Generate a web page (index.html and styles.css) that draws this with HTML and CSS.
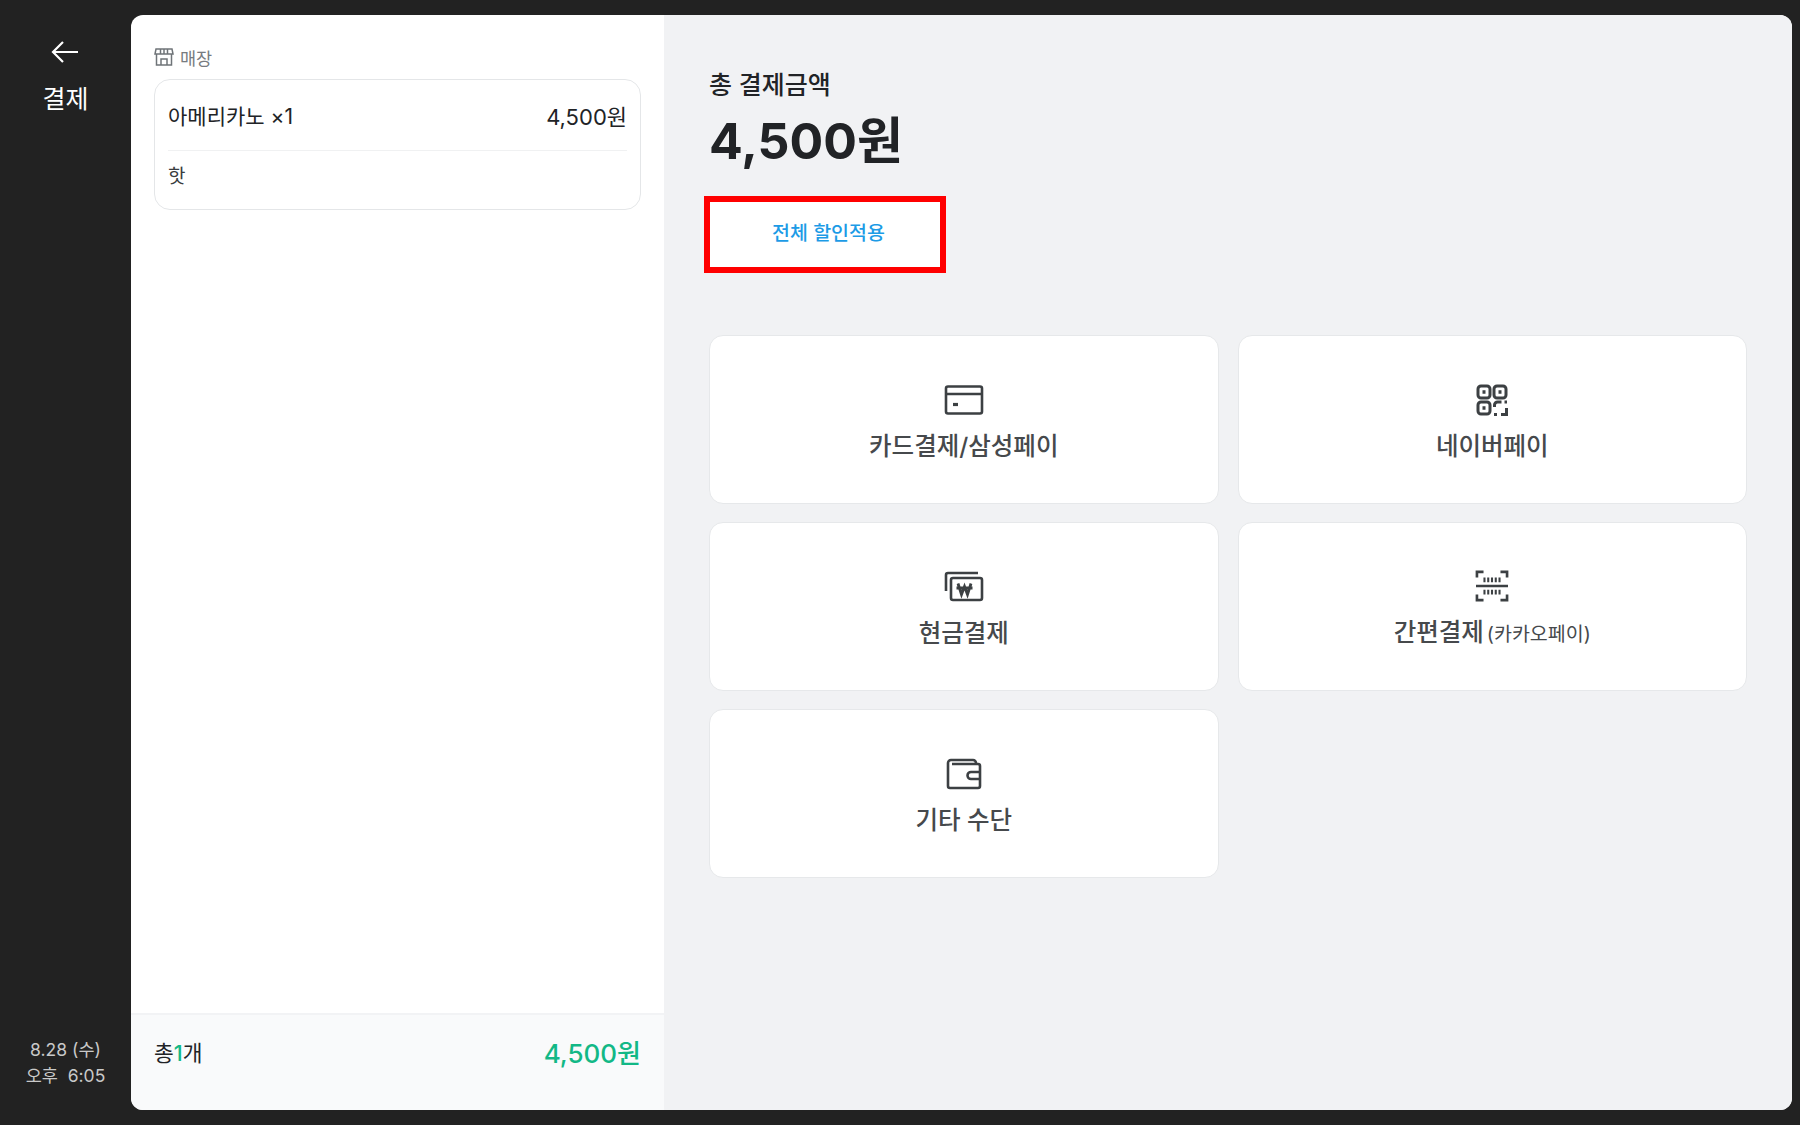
FILE: index.html
```html
<!DOCTYPE html>
<html lang="ko">
<head>
	<meta charset="utf-8">
	<title>결제</title>
	<link rel="stylesheet" href="styles.css">
</head>
<body>
	<div class="app">
		<nav class="side">
			<div class="side-top">
				<svg class="back" viewBox="0 0 28 24" fill="none" stroke="#fff" stroke-width="2.2"><path d="M27 12H2M12 2 2 12l10 10"/></svg>
				<div class="side-title">결제</div>
			</div>
			<div class="side-time">
				<div>8.28 (수)</div>
				<div>오후&nbsp; 6:05</div>
			</div>
		</nav>
		<main class="panel">
			<section class="order">
				<div class="order-body">
					<div class="place">
						<svg viewBox="0 0 20 20" fill="none" stroke="#6f7478" stroke-width="1.5"><path d="M2 2h16l1 5H1zM2.5 7v11h15V7M7 18v-6h6v6M6.5 2v5M13.5 2v5M10 2v5"/></svg>
						<span>매장</span>
					</div>
					<div class="item">
						<div class="item-row">
							<span>아메리카노 ×1</span>
							<span class="item-price">4,500원</span>
						</div>
						<div class="item-opt">핫</div>
					</div>
				</div>
				<div class="order-foot">
					<span class="foot-count">총<b>1</b>개</span>
					<span class="foot-price">4,500원</span>
				</div>
			</section>
			<section class="pay">
				<h2 class="pay-label">총 결제금액</h2>
				<div class="pay-total">4,500원</div>
				<div class="discount">전체 할인적용</div>
				<div class="methods">
					<div class="method">
						<svg viewBox="0 0 40 32" fill="none" stroke="#3c4043" stroke-width="2.6"><rect x="2" y="2.500" width="36" height="27" rx="2"/><path d="M2 10h36"/><path d="M9 20.500h5" stroke-width="3.200"/></svg>
						<div class="method-name">카드결제/삼성페이</div>
					</div>
					<div class="method">
						<svg viewBox="0 0 32 32" fill="none" stroke="#3c4043" stroke-width="3"><rect x="2" y="2" width="12" height="12" rx="3"/><rect x="18" y="2" width="12" height="12" rx="3"/><rect x="2" y="18" width="12" height="12" rx="3"/><path d="M18.500 23v-2a3 3 0 0 1 3-3h4M30.500 24v6.500H25M18 30.500h3M28.500 18h2.500"/><path d="M6.500 8h3M22.500 8h3M6.500 24h3" stroke-width="3.500"/></svg>
						<div class="method-name">네이버페이</div>
					</div>
					<div class="method">
						<svg viewBox="0 0 40 32" fill="none" stroke="#3c4043" stroke-width="2.6"><path d="M2 20V4a2 2 0 0 1 2-2h30"/><rect x="7" y="7" width="31" height="22" rx="2"/><path d="M14 12.500l3.500 11 3-8 3 8 3.500-11M12.500 17h16" stroke-width="2.800"/></svg>
						<div class="method-name">현금결제</div>
					</div>
					<div class="method">
						<svg viewBox="0 0 36 34" fill="none" stroke="#3c4043" stroke-width="2.8"><path d="M2 8V2h7M27 2h7v6M2 26v6h7M27 32h7v-6M1 17h34"/><path d="M10 8v5M14 8v5M18 8v5M22 8v5M26 8v5M10 21v5M14 21v5M18 21v5M22 21v5M26 21v5" stroke-width="2.200"/></svg>
						<div class="method-name">간편결제<small>(카카오페이)</small></div>
					</div>
					<div class="method">
						<svg viewBox="0 0 36 32" fill="none" stroke="#3c4043" stroke-width="2.600"><path d="M2 5a3 3 0 0 1 3-3h22a3 3 0 0 1 3 3v1"/><path d="M2 5v23a2 2 0 0 0 2 2h28a2 2 0 0 0 2-2V8a2 2 0 0 0-2-2H6"/><path d="M34 14h-9a3 3 0 0 0 0 7h9"/></svg>
						<div class="method-name">기타 수단</div>
					</div>
				</div>
			</section>
		</main>
	</div>
</body>
</html>
```

FILE: styles.css
```css
*{
	box-sizing: border-box;
}
html,body{
	margin:0;
	padding:0;
	height:100%;
}
body{
	background-color: #222222;
	font-family: Inter,"Noto Sans CJK KR",sans-serif;
	color: #212326;
}
.app{
	display:flex;
	height:1125px;
	padding:15px 8px 15px 0;
}
.side{
	width:131px;
	flex:none;
	display:flex;
	flex-direction:column;
	justify-content:space-between;
	align-items:center;
	color:white;
}
.side-top{
	display:flex;
	flex-direction:column;
	align-items:center;
	padding-top:25px;
}
.back{
	width:28px;
	height:24px;
}
.side-title{
	font-size:25px;
	line-height:36px;
	margin-top:17px;
}
.side-time{
	font-size:17.5px;
	line-height:26px;
	text-align:center;
	color:#c9c9c9;
	padding-bottom:21px;
}
.panel{
	flex:1;
	display:flex;
	background-color:white;
	border-radius:12px;
	overflow:hidden;
}
.order{
	width:533px;
	flex:none;
	display:flex;
	flex-direction:column;
}
.order-body{
	flex:1;
	padding:31px 23px 0;
}
.place{
	display:flex;
	align-items:center;
	gap:6px;
	height:22px;
	margin-bottom:11px;
	font-size:17.5px;
	color:#777b80;
}
.place svg{
	width:20px;
	height:20px;
}
.item{
	border:1px solid #e4e6e8;
	border-radius:16px;
	height:131px;
	padding:0 13px;
}
.item-row{
	display:flex;
	justify-content:space-between;
	align-items:center;
	height:71px;
	border-bottom:1px solid #f0f1f2;
	font-size:21px;
}
.item-price{
	font-size:22px;
}
.item-opt{
	font-size:19px;
	line-height:52px;
	color:#3a3d40;
}
.order-foot{
	height:97px;
	display:flex;
	justify-content:space-between;
	align-items:center;
	padding:0 23px 23px;
	background-color:#f9fafb;
	border-top:2px solid #f2f3f5;
}
.foot-count{
	font-size:21.5px;
}
.foot-count b{
	font-weight:500;
	color:#12b886;
}
.foot-price{
	font-size:26px;
	font-weight:500;
	color:#12b886;
}
.pay{
	flex:1;
	background-color:#f1f2f4;
	padding:51px 45px 0;
}
.pay-label{
	margin:0;
	font-size:25px;
	font-weight:500;
	line-height:38px;
}
.pay-total{
	font-size:50px;
	font-weight:700;
	line-height:66px;
	margin-top:4px;
}
.discount{
	width:242px;
	height:77px;
	margin:22px 0 62px -5px;
	padding:0 0 6px 7px;
	display:flex;
	align-items:center;
	justify-content:center;
	border:6px solid #ff0000;
	background-color:white;
	font-size:19.5px;
	font-weight:500;
	color:#1c9be6;
}
.methods{
	display:grid;
	grid-template-columns:1fr 1fr;
	grid-auto-rows:169px;
	gap:18px 19px;
}
.method{
	display:flex;
	flex-direction:column;
	align-items:center;
	justify-content:center;
	gap:13px;
	padding-top:8px;
	background-color:white;
	border:1px solid #e6e8ea;
	border-radius:14px;
}
.method svg{
	width:40px;
	height:32px;
}
.method-name{
	font-size:24.5px;
	font-weight:500;
	line-height:34px;
	color:#46494c;
}
.method-name small{
	font-size:19.500px;
	font-weight:400;
	margin-left:3px;
}
```
